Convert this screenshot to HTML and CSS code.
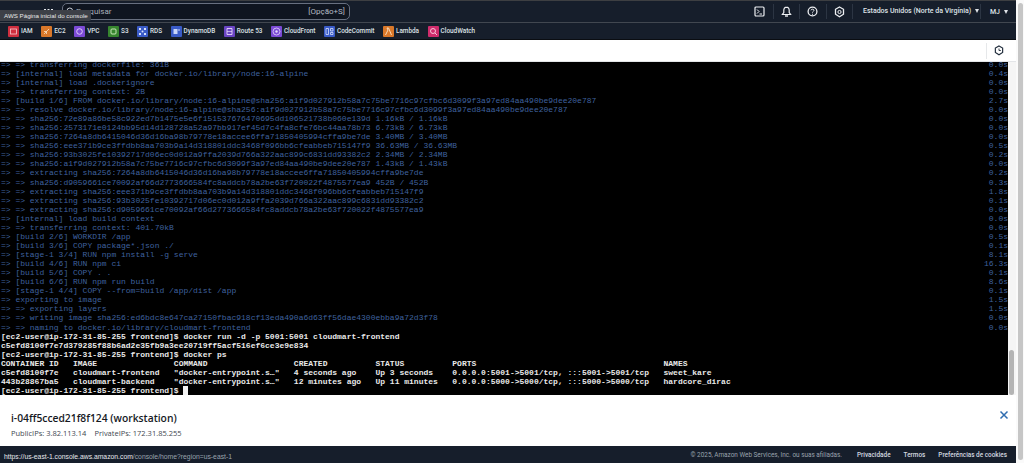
FILE: index.html
```html
<!DOCTYPE html>
<html lang="pt">
<head>
<meta charset="utf-8">
<title>EC2 Instance Connect</title>
<link rel="stylesheet" href="styles.css">
</head>
<body>
<div class="page">
  <main class="console">
    <header class="topnav">
      <span class="logo">aws</span>
      <span class="grid-icon">
        <svg width="9" height="6" viewBox="0 0 9 6"><path d="M0 0h2v2H0zM3.500 0h2v2h-2zM7 0h2v2H7zM0 3.500h2v2H0zM3.500 3.500h2v2h-2zM7 3.500h2v2H7z" fill="#e6e9ed"/></svg>
      </span>
      <div class="search">
        <svg class="search-icon" width="9" height="9" viewBox="0 0 9 9"><circle cx="3.800" cy="3.800" r="2.800" fill="none" stroke="#c9ced6"/><path d="M6 6l2.500 2.500" stroke="#c9ced6"/></svg>
        <span class="search-text">Pesquisar</span>
        <span class="search-key">[Opção+S]</span>
      </div>
      <div class="nav-right">
        <span class="nav-icon">
          <svg width="11" height="11" viewBox="0 0 11 11"><rect x="1" y="1" width="9" height="9" rx="1" fill="none" stroke="#eef0f3" stroke-width="1.200"/><path d="M3 3.500L5 5.500L3 7.500M5.500 8h2.500" fill="none" stroke="#eef0f3"/></svg>
        </span>
        <span class="nav-icon">
          <svg width="11" height="12" viewBox="0 0 11 12"><path d="M5.500 1.200C3.600 1.200 2.800 2.700 2.800 4.300V6.500L1.400 8.500H9.600L8.200 6.500V4.300C8.200 2.700 7.400 1.200 5.500 1.200Z" fill="none" stroke="#eef0f3" stroke-width="1.200"/><path d="M4 10h3" stroke="#eef0f3" stroke-width="1.400"/></svg>
        </span>
        <span class="nav-icon">
          <svg width="11" height="11" viewBox="0 0 11 11"><circle cx="5.500" cy="5.500" r="4.400" fill="none" stroke="#eef0f3" stroke-width="1.300"/><path d="M4 4.300C4 2.800 7 2.800 7 4.300C7 5.300 5.500 5.300 5.500 6.600" fill="none" stroke="#eef0f3"/><path d="M5 7.700h1v1H5z" fill="#eef0f3"/></svg>
        </span>
        <span class="nav-icon">
          <svg width="11" height="12" viewBox="0 0 11 12"><path d="M5.500 1L9.500 3.300V8.200L5.500 10.800L1.500 8.200V3.300Z" fill="none" stroke="#eef0f3" stroke-width="1.300"/><circle cx="5.500" cy="6" r="1.600" fill="none" stroke="#eef0f3"/></svg>
        </span>
        <span class="region">Estados Unidos (Norte da Virgínia) <i class="caret"></i></span>
        <span class="user">MJ <i class="caret"></i></span>
      </div>
    </header>

    <nav class="services">
      <span class="svc"><i class="svc-icon red"><svg viewBox="0 0 11 11"><rect x="2.500" y="3" width="6" height="5" fill="none" stroke="#f6c9cf" stroke-width=".8"/></svg></i>IAM</span>
      <span class="svc"><i class="svc-icon orange"><svg viewBox="0 0 11 11"><path d="M3 8l5-5M3 5.500h2.500V8" fill="none" stroke="#fde3c4" stroke-width=".8"/></svg></i>EC2</span>
      <span class="svc"><i class="svc-icon violet"><svg viewBox="0 0 11 11"><circle cx="5.500" cy="5.500" r="2.800" fill="none" stroke="#e4d9fb" stroke-width=".9"/></svg></i>VPC</span>
      <span class="svc"><i class="svc-icon green"><svg viewBox="0 0 11 11"><rect x="3" y="3" width="5" height="5" rx="1" fill="none" stroke="#d7f0c6" stroke-width=".9"/></svg></i>S3</span>
      <span class="svc"><i class="svc-icon blue"><svg viewBox="0 0 11 11"><path d="M2 2h2v2H2zM7 2h2v2H7zM2 7h2v2H2zM7 7h2v2H7z" fill="#d6e0fb"/><circle cx="5.500" cy="5.500" r="1" fill="#d6e0fb"/></svg></i>RDS</span>
      <span class="svc"><i class="svc-icon blue"><svg viewBox="0 0 11 11"><path d="M2.500 3h4v5h-4z" fill="#c9d6fa"/><path d="M7.500 3h1v2h-1z" fill="#c9d6fa"/></svg></i>DynamoDB</span>
      <span class="svc"><i class="svc-icon purple"><svg viewBox="0 0 11 11"><path d="M3 2.500h5v6H3z" fill="none" stroke="#e4d9fb" stroke-width=".9"/><path d="M3 5.500h5" stroke="#e4d9fb" stroke-width=".7"/></svg></i>Route 53</span>
      <span class="svc"><i class="svc-icon violet"><svg viewBox="0 0 11 11"><circle cx="5.500" cy="5.500" r="3.500" fill="none" stroke="#e4d9fb" stroke-width=".8"/><circle cx="5.500" cy="5.500" r="1.200" fill="#e4d9fb"/></svg></i>CloudFront</span>
      <span class="svc"><i class="svc-icon blue"><svg viewBox="0 0 11 11"><path d="M2 2.500h2.500v6H2zM6.500 2.500H9v2.500H6.500zM6.500 6.500H9v2H6.500z" fill="none" stroke="#d6e0fb" stroke-width=".8"/></svg></i>CodeCommit</span>
      <span class="svc"><i class="svc-icon orange"><svg viewBox="0 0 11 11"><path d="M2.500 9L5 4 4 2h1.500L8.500 9" fill="none" stroke="#fde3c4" stroke-width=".9"/></svg></i>Lambda</span>
      <span class="svc"><i class="svc-icon pink"><svg viewBox="0 0 11 11"><circle cx="5" cy="5" r="2.500" fill="none" stroke="#fbd3e2" stroke-width=".9"/><path d="M7 7l2 2" stroke="#fbd3e2" stroke-width=".9"/></svg></i>CloudWatch</span>
    </nav>

    <div class="toolbar">
      <span class="toolbar-btn">
        <svg width="10" height="11" viewBox="0 0 11 12"><path d="M5.500 1L9.500 3.300V8.200L5.500 10.800L1.500 8.200V3.300Z" fill="none" stroke="#232f3e" stroke-width="1.300"/><path d="M5.500 3.800V6H7.500" fill="none" stroke="#232f3e"/></svg>
      </span>
    </div>

    <section class="term-wrap">
      <div class="terminal">
        <div class="ln"><span>=&gt; =&gt; transferring dockerfile: 361B</span><span>0.0s</span></div>
        <div class="ln"><span>=&gt; [internal] load metadata for docker.io/library/node:16-alpine</span><span>0.4s</span></div>
        <div class="ln"><span>=&gt; [internal] load .dockerignore</span><span>0.0s</span></div>
        <div class="ln"><span>=&gt; =&gt; transferring context: 2B</span><span>0.0s</span></div>
        <div class="ln"><span>=&gt; [build 1/6] FROM docker.io/library/node:16-alpine@sha256:a1f9d027912b58a7c75be7716c97cfbc6d3099f3a97ed84aa490be9dee20e787</span><span>2.7s</span></div>
        <div class="ln"><span>=&gt; =&gt; resolve docker.io/library/node:16-alpine@sha256:a1f9d027912b58a7c75be7716c97cfbc6d3099f3a97ed84aa490be9dee20e787</span><span>0.0s</span></div>
        <div class="ln"><span>=&gt; =&gt; sha256:72e89a86be58c922ed7b1475e5e6f151537676470695dd106521738b060e139d 1.16kB / 1.16kB</span><span>0.0s</span></div>
        <div class="ln"><span>=&gt; =&gt; sha256:2573171e0124bb95d14d128728a52a97bb917ef45d7c4fa8cfe76bc44aa78b73 6.73kB / 6.73kB</span><span>0.0s</span></div>
        <div class="ln"><span>=&gt; =&gt; sha256:7264a8db6415046d36d16ba98b79778e18accee6ffa71850405994cffa9be7de 3.40MB / 3.40MB</span><span>0.0s</span></div>
        <div class="ln"><span>=&gt; =&gt; sha256:eee371b9ce3ffdbb8aa703b9a14d318801ddc3468f096bb6cfeabbeb715147f9 36.63MB / 36.63MB</span><span>0.5s</span></div>
        <div class="ln"><span>=&gt; =&gt; sha256:93b3025fe10392717d06ec0d012a9ffa2039d766a322aac899c6831dd93382c2 2.34MB / 2.34MB</span><span>0.2s</span></div>
        <div class="ln"><span>=&gt; =&gt; sha256:a1f9d027912b58a7c75be7716c97cfbc6d3099f3a97ed84aa490be9dee20e787 1.43kB / 1.43kB</span><span>0.0s</span></div>
        <div class="ln"><span>=&gt; =&gt; extracting sha256:7264a8db6415046d36d16ba98b79778e18accee6ffa71850405994cffa9be7de</span><span>0.2s</span></div>
        <div class="ln"><span>=&gt; =&gt; sha256:d9059661ce70092af66d2773666584fc8addcb78a2be63f720022f4875577ea9 452B / 452B</span><span>0.3s</span></div>
        <div class="ln"><span>=&gt; =&gt; extracting sha256:eee371b9ce3ffdbb8aa703b9a14d318801ddc3468f096bb6cfeabbeb715147f9</span><span>1.8s</span></div>
        <div class="ln"><span>=&gt; =&gt; extracting sha256:93b3025fe10392717d06ec0d012a9ffa2039d766a322aac899c6831dd93382c2</span><span>0.1s</span></div>
        <div class="ln"><span>=&gt; =&gt; extracting sha256:d9059661ce70092af66d2773666584fc8addcb78a2be63f720022f4875577ea9</span><span>0.0s</span></div>
        <div class="ln"><span>=&gt; [internal] load build context</span><span>0.0s</span></div>
        <div class="ln"><span>=&gt; =&gt; transferring context: 401.70kB</span><span>0.0s</span></div>
        <div class="ln"><span>=&gt; [build 2/6] WORKDIR /app</span><span>0.5s</span></div>
        <div class="ln"><span>=&gt; [build 3/6] COPY package*.json ./</span><span>0.1s</span></div>
        <div class="ln"><span>=&gt; [stage-1 3/4] RUN npm install -g serve</span><span>8.1s</span></div>
        <div class="ln"><span>=&gt; [build 4/6] RUN npm ci</span><span>16.3s</span></div>
        <div class="ln"><span>=&gt; [build 5/6] COPY . .</span><span>0.1s</span></div>
        <div class="ln"><span>=&gt; [build 6/6] RUN npm run build</span><span>8.6s</span></div>
        <div class="ln"><span>=&gt; [stage-1 4/4] COPY --from=build /app/dist /app</span><span>0.1s</span></div>
        <div class="ln"><span>=&gt; exporting to image</span><span>1.5s</span></div>
        <div class="ln"><span>=&gt; =&gt; exporting layers</span><span>1.5s</span></div>
        <div class="ln"><span>=&gt; =&gt; writing image sha256:ed6bdc8e647ca27150fbac918cf13eda490a6d63ff56dae4300ebba9a72d3f78</span><span>0.0s</span></div>
        <div class="ln"><span>=&gt; =&gt; naming to docker.io/library/cloudmart-frontend</span><span>0.0s</span></div>
        <div class="out">[ec2-user@ip-172-31-85-255 frontend]$ docker run -d -p 5001:5001 cloudmart-frontend</div>
        <div class="out">c5efd8100f7e7d379285f88b6ad2e35fb9a3ee20719ff5acf516ef6ce3e9e834</div>
        <div class="out">[ec2-user@ip-172-31-85-255 frontend]$ docker ps</div>
        <div class="out">CONTAINER ID   IMAGE                COMMAND                  CREATED          STATUS          PORTS                                       NAMES</div>
        <div class="out">c5efd8100f7e   cloudmart-frontend   "docker-entrypoint.s…"   4 seconds ago    Up 3 seconds    0.0.0.0:5001-&gt;5001/tcp, :::5001-&gt;5001/tcp   sweet_kare</div>
        <div class="out">443b28867ba5   cloudmart-backend    "docker-entrypoint.s…"   12 minutes ago   Up 11 minutes   0.0.0.0:5000-&gt;5000/tcp, :::5000-&gt;5000/tcp   hardcore_dirac</div>
        <div class="out">[ec2-user@ip-172-31-85-255 frontend]$ <i class="cursor"></i></div>
      </div>
      <div class="term-scroll"><i class="term-thumb"></i></div>
    </section>

    <section class="details">
      <div class="details-text">
        <h1 class="instance">i-04ff5cced21f8f124 (workstation)</h1>
        <p class="ips"><span>PublicIPs: 3.82.113.14</span><span>PrivateIPs: 172.31.85.255</span></p>
      </div>
      <svg class="close" width="10" height="10" viewBox="0 0 10 10"><path d="M1.500 1.500l7 7M8.500 1.500l-7 7" stroke="#2f6db0" stroke-width="1.500" fill="none"/></svg>
    </section>

    <footer class="footer">
      <span class="copy">© 2025, Amazon Web Services, Inc. ou suas afiliadas.</span>
      <span class="flink">Privacidade</span>
      <span class="flink">Termos</span>
      <span class="flink">Preferências de cookies</span>
    </footer>
  </main>
  <div class="page-scroll"><i class="page-thumb"></i></div>
</div>
<div class="tooltip">AWS Página inicial do console</div>
<div class="status"><b>https://us-east-1.console.aws.amazon.com</b>/console/home?region=us-east-1</div>
</body>
</html>
```

FILE: styles.css
```css
* { box-sizing: border-box; }
html, body { margin: 0; padding: 0; height: 100%; overflow: hidden; }
body { font-family: Roboto, "Liberation Sans", sans-serif; background: #fff; }
.page { display: flex; height: 463px; width: 1024px; }
.console { width: 1016px; flex: none; display: flex; flex-direction: column; height: 100%; }
.page-scroll { width: 8px; flex: none; background: #fafafa; padding: 3px 1px 3px 2px; display: flex; }
.page-thumb { display: block; width: 100%; background: #c6c6c6; border-radius: 3px; }

.topnav { height: 23px; flex: none; background: #161e2b; border-top: 1px solid #3d3f42; border-bottom: 1px solid #414750; display: flex; align-items: center; color: #eef0f3; }
.logo { width: 44px; padding-left: 10px; font-size: 9px; font-weight: 700; color: #e6e9ed; }
.grid-icon { width: 18px; display: flex; }
.search { width: 288px; height: 17px; border: 1px solid #687080; border-radius: 5px; background: #0f1520; display: flex; align-items: center; padding: 0 4px 0 3px; font-size: 8px; color: #aab1bb; }
.search-icon { margin-right: 1px; }
.search-text { flex: 1; }
.search-key { color: #b4bac3; font-size: 8px; }
.nav-right { margin-left: auto; display: flex; align-items: center; height: 100%; }
.nav-icon { width: 26.500px; height: 15px; display: flex; align-items: center; justify-content: center; border-right: 1px solid #2c3543; }
.region { width: 128px; padding-left: 10px; font-size: 7px; font-weight: 500; color: #dfe3e8; border-right: 1px solid #2c3543; white-space: nowrap; line-height: 15px; }
.user { width: 35px; padding-left: 9px; font-size: 7px; font-weight: 500; color: #dfe3e8; white-space: nowrap; }
.caret { display: inline-block; width: 0; height: 0; border-left: 2.500px solid transparent; border-right: 2.500px solid transparent; border-top: 4px solid #dfe3e8; margin-left: 2px; vertical-align: 0; }

.services { height: 17px; flex: none; background: #161e2b; border-bottom: 1px solid #0a0d12; display: flex; align-items: center; gap: 8.500px; padding-left: 8px; }
.svc { display: flex; align-items: center; gap: 2px; font-size: 6.400px; font-weight: 500; color: #dde1e6; white-space: nowrap; }
.svc-icon { display: block; width: 11px; height: 11px; border-radius: 1px; flex: none; }
.svc-icon svg { display: block; width: 11px; height: 11px; }
.red { background: #cf2f3f; }
.orange { background: #d9782a; }
.violet { background: #7b4ad6; }
.purple { background: #6a45c4; }
.green { background: #37862f; }
.blue { background: #3a5bc7; }
.pink { background: #cf2c6c; }

.toolbar { height: 22px; flex: none; background: #fff; border-bottom: 1px solid #e3e5e8; display: flex; justify-content: flex-end; align-items: center; padding-right: 12px; }
.toolbar-btn { display: flex; width: 18px; height: 16px; align-items: center; justify-content: flex-end; border-left: 1px solid #e6e8ea; }

.term-wrap { height: 333px; flex: none; display: flex; background: #fff; }
.terminal { width: 1008px; flex: none; height: 100%; background: #000; overflow: hidden; display: flex; flex-direction: column; justify-content: flex-end; padding-left: 1px; font-family: "Liberation Mono", monospace; font-size: 8px; line-height: 9.070px; white-space: pre; }
.ln { display: flex; justify-content: space-between; color: #3f619f; height: 9.070px; flex: none; }
.out { color: #e9e9e9; font-weight: 700; height: 9.070px; flex: none; }
.cursor { display: inline-block; width: 5px; height: 9px; background: #f2f2f2; vertical-align: top; }
.term-scroll { width: 8px; flex: none; background: #f5f5f5; padding: 0 2px 0 1px; display: flex; align-items: flex-end; }
.term-thumb { display: block; width: 100%; height: 45px; background: #b4b4b4; border-radius: 3px; }

.details { height: 51px; flex: none; background: #fff; display: flex; align-items: flex-start; justify-content: space-between; padding: 17px 7px 0 11px; }
.instance { margin: 0 0 4px; font-family: "Open Sans", sans-serif; font-size: 10.300px; line-height: 12px; font-weight: 600; color: #16191f; }
.ips { margin: 0; display: flex; gap: 8px; font-family: "Open Sans", sans-serif; font-size: 7.500px; line-height: 10px; color: #414750; }
.close { flex: none; margin-top: -2px; }

.footer { height: 17px; flex: none; background: #161e2b; display: flex; align-items: center; justify-content: flex-end; gap: 13px; padding-right: 9px; font-size: 6.400px; font-weight: 500; color: #d5dbe1; }
.copy { margin-right: 2px; color: #9aa3ad; font-weight: 400; }

.tooltip { position: absolute; left: 0; top: 10px; height: 11px; width: 91px; background: #3d4047; color: #e8e8e8; font-family: "Liberation Sans", sans-serif; font-size: 6.200px; line-height: 11px; padding-left: 4px; white-space: nowrap; border-radius: 0 2px 2px 0; }
.status { position: absolute; left: 0; bottom: 0; height: 13px; width: 236px; background: #161e2b; color: #9aa3ad; font-family: "Liberation Sans", sans-serif; font-size: 6.800px; line-height: 13px; padding-left: 4px; white-space: nowrap; }
.status b { color: #e6e9ed; font-weight: 400; }
```
